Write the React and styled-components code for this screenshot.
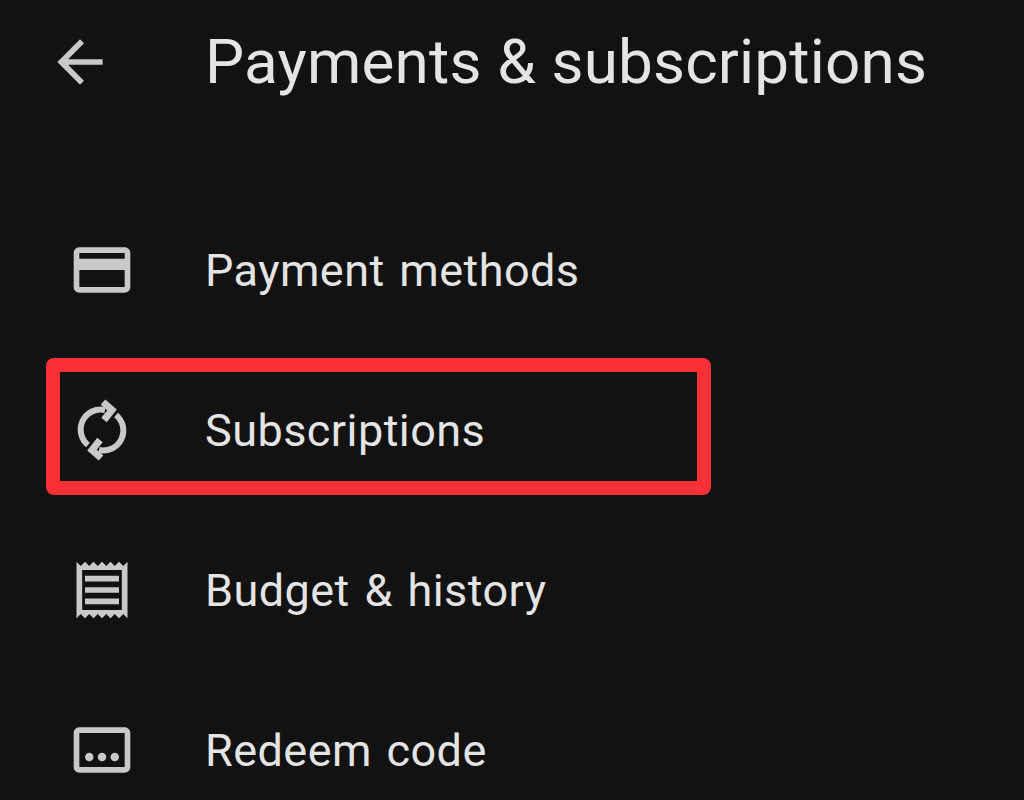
import React from "react";
import styled, { createGlobalStyle } from "styled-components";

const Global = createGlobalStyle`
  html, body { margin: 0; padding: 0; background: #121212; }
  #root { width: 1024px; height: 800px; }
`;

const Page = styled.div`
  width: 1024px;
  height: 800px;
  overflow: hidden;
  background: #121212;
  font-family: Roboto, "Liberation Sans", sans-serif;
  color: #e4e4e4;
  padding-left: 68px;
  box-sizing: border-box;
`;

const Header = styled.header`
  height: 124px;
  margin-left: -22px;
  display: flex;
  align-items: center;
  gap: 91px;
  margin-bottom: 66px;
`;

const Title = styled.h1`
  margin: 0;
  font-size: 62px;
  font-weight: 400;
  line-height: 1;
  letter-spacing: 0.18px;
  white-space: nowrap;
`;

const List = styled.ul`
  list-style: none;
  margin: 0;
  padding: 0;
  display: flex;
  flex-direction: column;
`;

const Row = styled.li`
  position: relative;
  height: 160px;
  display: flex;
  align-items: center;
  gap: 69px;
`;

const Label = styled.span`
  font-size: 45px;
  line-height: 1;
  letter-spacing: 0.45px;
  word-spacing: 3px;
  white-space: nowrap;
`;

const Icon = styled.svg`
  width: 68px;
  height: 68px;
  flex: none;
  fill: #c9c9c9;
`;

const Highlight = styled.div`
  position: absolute;
  left: -22px;
  top: 8px;
  width: 665px;
  height: 137px;
  box-sizing: border-box;
  border: 14px solid #fb2f36;
  border-radius: 8px;
`;

const Back = () => (
  <Icon viewBox="0 0 24 24"><path d="M20 11H7.83l5.59-5.59L12 4l-8 8 8 8 1.41-1.41L7.83 13H20v-2z" /></Icon>
);
const Card = () => (
  <Icon viewBox="0 0 24 24"><path fillRule="evenodd" d="M20 4H4c-1.11 0-1.99.89-1.99 2L2 18c0 1.11.89 2 2 2h16c1.11 0 2-.89 2-2V6c0-1.11-.89-2-2-2zm0 14H4v-6h16v6zm0-10H4V6h16v2z" /></Icon>
);
const Sync = () => (
  <Icon viewBox="-34 -34 68 68">
    <g fill="none" stroke="#c9c9c9" strokeWidth="6">
      <path d="M-14 15A20 20 0 0 1 3 -20" />
      <path d="M14 -15A20 20 0 0 1 -3 20" />
      <path d="M1 -28L10 -20L2 -10" strokeWidth="7" />
      <path d="M-1 28L-10 20L-2 10" strokeWidth="7" />
    </g>
  </Icon>
);
const Receipt = () => (
  <Icon viewBox="0 0 24 24"><path fillRule="evenodd" d="M19.5 3.5L18 2l-1.5 1.5L15 2l-1.5 1.5L12 2l-1.5 1.5L9 2 7.5 3.5 6 2 4.5 3.5 3 2v20l1.5-1.5L6 22l1.5-1.5L9 22l1.5-1.5L12 22l1.5-1.5L15 22l1.5-1.5L18 22l1.5-1.5L21 22V2l-1.5 1.5zM19 19.09H5V4.91h14v14.18zM6 15h12v2H6zm0-4h12v2H6zm0-4h12v2H6z" /></Icon>
);
const Redeem = () => (
  <Icon viewBox="0 0 24 24">
    <path fillRule="evenodd" d="M20 4H4c-1.1 0-2 .9-2 2v12c0 1.1.9 2 2 2h16c1.1 0 2-.9 2-2V6c0-1.1-.9-2-2-2zm0 14H4V6h16v12z" />
    <circle cx="7.5" cy="14.5" r="1.5" />
    <circle cx="12" cy="14.5" r="1.5" />
    <circle cx="16.5" cy="14.5" r="1.5" />
  </Icon>
);

const items = [
  { label: "Payment methods", icon: <Card /> },
  { label: "Subscriptions", icon: <Sync />, marked: true },
  { label: "Budget & history", icon: <Receipt /> },
  { label: "Redeem code", icon: <Redeem /> },
];

export default function App() {
  return (
    <Page>
      <Global />
      <Header>
        <Back />
        <Title>Payments &amp; subscriptions</Title>
      </Header>
      <List>
        {items.map((it) => (
          <Row key={it.label}>
            {it.icon}
            <Label>{it.label}</Label>
            {it.marked && <Highlight />}
          </Row>
        ))}
      </List>
    </Page>
  );
}
